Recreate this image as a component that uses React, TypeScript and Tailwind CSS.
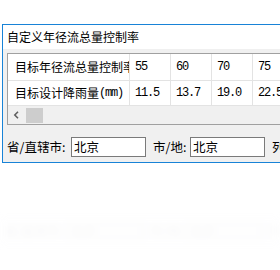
import React from "react";

const cjk = "font-['Noto_Sans_CJK_SC','Noto_Sans',sans-serif]";
const mono = "font-['Liberation_Mono','Noto_Sans_CJK_SC',monospace] tracking-[-1.2px]";

function NumCell({ v }: { v: string }) {
  return (
    <div className={`w-[41px] shrink-0 border-r border-[#e3e3e3] pl-[5px] text-[12px] text-black flex items-center ${mono}`}>
      {v}
    </div>
  );
}

function FormRow() {
  return (
    <div className={`flex items-center text-[12px] text-black ${cjk}`}>
      <span className="w-[68px] shrink-0 pl-[4px] whitespace-nowrap leading-[20px] text-[12.5px]">省/直辖市:</span>
      <div className="w-[75px] h-[20px] shrink-0 border border-[#7a7a7a] bg-white pl-[2px] leading-[18px] text-[12.5px]">北京</div>
      <span className="ml-[7px] w-[37px] shrink-0 whitespace-nowrap leading-[20px] text-[12.5px]">市/地:</span>
      <div className="w-[75px] h-[20px] shrink-0 border border-[#7a7a7a] bg-white pl-[2px] leading-[18px] text-[12.5px]">北京</div>
      <span className="ml-[7px] shrink-0 whitespace-nowrap leading-[20px] text-[12.5px]">列</span>
    </div>
  );
}

export default function App() {
  return (
    <div className={`w-[280px] h-[270px] bg-white overflow-hidden ${cjk}`}>
      <div className="pt-[24px] pl-[2px]">
        <div className="w-[320px] border-t border-l border-b border-[#1883d7] bg-[#f0f0f0]">
          <div className="h-[24px] bg-white pl-[4px] text-[12px] leading-[24px] text-black whitespace-nowrap">
            自定义年径流总量控制率
          </div>
          <div className="pt-[4px] pl-[4px]">
            <div className="border-t border-l border-b border-[#a0a0a0] bg-white">
              <div className="flex h-[27px] border-b border-[#e3e3e3]">
                <div className="w-[122px] shrink-0 border-r border-[#e3e3e3] pl-[7px] overflow-hidden whitespace-nowrap text-[12px] text-black flex items-center">
                  目标年径流总量控制率
                </div>
                <NumCell v="55" />
                <NumCell v="60" />
                <NumCell v="70" />
                <NumCell v="75" />
                <NumCell v="80" />
              </div>
              <div className="flex h-[25px] border-b border-[#e3e3e3]">
                <div className="w-[122px] shrink-0 border-r border-[#e3e3e3] pl-[7px] overflow-hidden whitespace-nowrap text-[12px] text-black flex items-center">
                  目标设计降雨量<span className={mono}>(mm)</span>
                </div>
                <NumCell v="11.5" />
                <NumCell v="13.7" />
                <NumCell v="19.0" />
                <NumCell v="22.5" />
                <NumCell v="27.3" />
              </div>
              <div className="h-[18px] bg-[#f0f0f0] flex items-center">
                <div className="w-[17px] flex items-center justify-center">
                  <svg width="7" height="8" viewBox="0 0 7 8">
                    <path d="M5 0.8 L1.8 4 L5 7.2" fill="none" stroke="#606060" strokeWidth="1.6" />
                  </svg>
                </div>
                <div className="ml-[1px] w-[17px] h-[15px] bg-[#cdcdcd]" />
              </div>
            </div>
          </div>
          <div className="pt-[12px] pb-[5px]">
            <FormRow />
          </div>
        </div>
      </div>
      <div className="mt-[52px] h-[32px] bg-[#fcfcfd] blur-[3px] opacity-[0.25] pt-[6px]">
        <div className="opacity-[0.1]">
          <FormRow />
        </div>
      </div>
    </div>
  );
}
